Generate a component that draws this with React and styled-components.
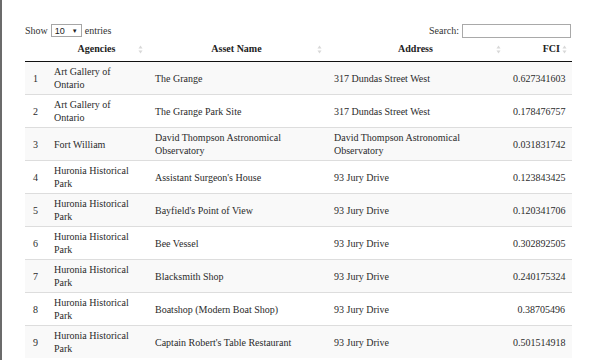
import React from "react";
import styled, { createGlobalStyle } from "styled-components";

const GlobalStyle = createGlobalStyle`
  html, body {
    margin: 0;
    padding: 0;
    background: #fff;
  }
  body {
    font-family: "Liberation Serif", "Times New Roman", serif;
    color: #333;
  }
`;

const Page = styled.div`
  width: 596px;
  height: 360px;
  box-sizing: border-box;
  border-left: 2px solid #6b6b6b;
  padding: 22px 0 0 23px;
  overflow: hidden;
`;

const Wrapper = styled.div`
  width: 547px;
`;

const Controls = styled.div`
  display: flex;
  justify-content: space-between;
  align-items: center;
  height: 17px;
  font-size: 10px;
  color: #333;
`;

const Label = styled.label`
  display: flex;
  align-items: center;
  gap: 3px;
`;

const FakeSelect = styled.div`
  width: 31px;
  height: 13px;
  box-sizing: border-box;
  border: 1px solid #a6a6a6;
  display: flex;
  align-items: center;
  justify-content: space-between;
  padding: 0 3px 0 3px;
  font-family: "Liberation Sans", Arial, sans-serif;
  font-size: 9px;
  color: #222;
  background: #fff;
`;

const Caret = styled.span`
  font-size: 6px;
`;

const SearchInput = styled.input`
  width: 109px;
  height: 14px;
  box-sizing: border-box;
  border: 1px solid #a9a9a9;
  padding: 0;
  margin-right: 1px;
`;

const Table = styled.table`
  width: 547px;
  table-layout: fixed;
  border-collapse: separate;
  border-spacing: 0;
  font-size: 10px;
`;

const Th = styled.th`
  position: relative;
  height: 23px;
  box-sizing: border-box;
  padding: 0 ${(p) => (p.$right ? "12px" : "8px")} 4px 8px;
  text-align: ${(p) => (p.$right ? "right" : "center")};
  font-weight: bold;
  color: #222;
  border-bottom: 1px solid #111;
  vertical-align: middle;
`;

const SortIcon = styled.svg`
  position: absolute;
  right: ${(p) => p.$offset || 4}px;
  top: 6px;
`;

const Tr = styled.tr`
  background: ${(p) => (p.$odd ? "#f9f9f9" : "#fff")};
`;

const Td = styled.td`
  height: ${(p) => (p.$first ? "32px" : "33px")};
  box-sizing: border-box;
  padding: 0 ${(p) => (p.$right ? "7px" : "8px")} 0 8px;
  border-top: ${(p) => (p.$first ? "none" : "1px solid #ddd")};
  text-align: ${(p) => (p.$right ? "right" : "left")};
  line-height: 13px;
  color: #2b2b2b;
  vertical-align: middle;
`;

const Sort = ({ offset }) => (
  <SortIcon $offset={offset} width="5" height="9" viewBox="0 0 5 9">
    <path d="M2.5 0.5 L4.5 3.5 L0.5 3.5 Z" fill="#d8d8d8" />
    <path d="M2.5 8.5 L4.5 5.5 L0.5 5.5 Z" fill="#d8d8d8" />
  </SortIcon>
);

const rows = [
  ["Art Gallery of Ontario", "The Grange", "317 Dundas Street West", "0.627341603"],
  ["Art Gallery of Ontario", "The Grange Park Site", "317 Dundas Street West", "0.178476757"],
  ["Fort William", "David Thompson Astronomical Observatory", "David Thompson Astronomical Observatory", "0.031831742"],
  ["Huronia Historical Park", "Assistant Surgeon's House", "93 Jury Drive", "0.123843425"],
  ["Huronia Historical Park", "Bayfield's Point of View", "93 Jury Drive", "0.120341706"],
  ["Huronia Historical Park", "Bee Vessel", "93 Jury Drive", "0.302892505"],
  ["Huronia Historical Park", "Blacksmith Shop", "93 Jury Drive", "0.240175324"],
  ["Huronia Historical Park", "Boatshop (Modern Boat Shop)", "93 Jury Drive", "0.38705496"],
  ["Huronia Historical Park", "Captain Robert's Table Restaurant", "93 Jury Drive", "0.501514918"],
];

export default function App() {
  return (
    <>
      <GlobalStyle />
      <Page>
        <Wrapper>
          <Controls>
            <Label>
              Show
              <FakeSelect>
                10 <Caret>▼</Caret>
              </FakeSelect>
              entries
            </Label>
            <Label>
              Search:
              <SearchInput type="search" />
            </Label>
          </Controls>
          <Table>
            <colgroup>
              <col style={{ width: 21 }} />
              <col style={{ width: 101 }} />
              <col style={{ width: 179 }} />
              <col style={{ width: 179 }} />
              <col style={{ width: 67 }} />
            </colgroup>
            <thead>
              <tr>
                <Th />
                <Th>
                  Agencies
                  <Sort />
                </Th>
                <Th>
                  Asset Name
                  <Sort />
                </Th>
                <Th>
                  Address
                  <Sort />
                </Th>
                <Th $right>
                  FCI
                  <Sort offset={5} />
                </Th>
              </tr>
            </thead>
            <tbody>
              {rows.map((r, i) => (
                <Tr key={i} $odd={i % 2 === 0}>
                  <Td $first={i === 0}>{i + 1}</Td>
                  <Td $first={i === 0}>{r[0]}</Td>
                  <Td $first={i === 0}>{r[1]}</Td>
                  <Td $first={i === 0}>{r[2]}</Td>
                  <Td $first={i === 0} $right>
                    {r[3]}
                  </Td>
                </Tr>
              ))}
            </tbody>
          </Table>
        </Wrapper>
      </Page>
    </>
  );
}
